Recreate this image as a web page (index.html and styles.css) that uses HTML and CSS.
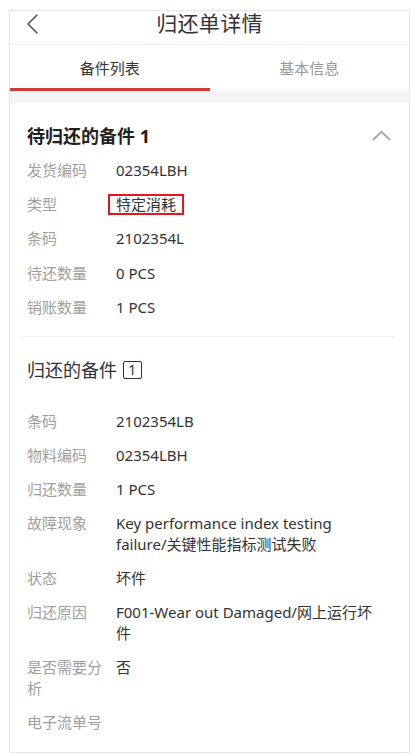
FILE: index.html
```html
<!DOCTYPE html>
<html lang="zh">
<head>
<meta charset="utf-8">
<title>归还单详情</title>
<link rel="stylesheet" href="styles.css">
</head>
<body>
<div class="frame">
  <header class="header">
    <span class="back">
      <svg width="14" height="22" viewBox="0 0 14 22"><path d="M12 2 L3 11 L12 20" fill="none" stroke="#555" stroke-width="1.6" stroke-linecap="round" stroke-linejoin="round"/></svg>
    </span>
    <h1 class="title">归还单详情</h1>
  </header>
  <nav class="tabs">
    <div class="tab active">备件列表</div>
    <div class="tab">基本信息</div>
  </nav>
  <div class="band"></div>
  <main class="card">
    <section class="sec sec1">
      <div class="sec-head">
        <h2 class="sec-title bold">待归还的备件 1</h2>
        <svg class="chev" width="19" height="11" viewBox="0 0 19 11"><path d="M1.5 9.5 L9.5 1.8 L17.5 9.5" fill="none" stroke="#aaa" stroke-width="2" stroke-linecap="round" stroke-linejoin="round"/></svg>
      </div>
      <dl class="rows">
        <dt>发货编码</dt><dd>02354LBH</dd>
        <dt>类型</dt><dd><span class="mark">特定消耗</span></dd>
        <dt>条码</dt><dd>2102354L</dd>
        <dt>待还数量</dt><dd>0 PCS</dd>
        <dt>销账数量</dt><dd>1 PCS</dd>
      </dl>
    </section>
    <div class="divider"></div>
    <section class="sec sec2">
      <h2 class="sec-title">归还的备件 <span class="count">1</span></h2>
      <dl class="rows rows2">
        <dt>条码</dt><dd>2102354LB</dd>
        <dt>物料编码</dt><dd>02354LBH</dd>
        <dt>归还数量</dt><dd>1 PCS</dd>
        <dt>故障现象</dt><dd>Key performance index testing failure/关键性能指标测试失败</dd>
        <dt>状态</dt><dd>坏件</dd>
        <dt>归还原因</dt><dd>F001-Wear out Damaged/网上运行坏件</dd>
        <dt>是否需要分析</dt><dd>否</dd>
        <dt>电子流单号</dt><dd></dd>
      </dl>
    </section>
  </main>
</div>
</body>
</html>
```
FILE: styles.css
```css
* { box-sizing: border-box; }
html, body { margin: 0; padding: 0; background: #fff; }
body {
  font-family: "Noto Sans", "Noto Sans CJK SC", sans-serif;
  color: #333;
  height: 756px;
  overflow: hidden;
}
.frame {
  margin: 10px 1px 0 9px;
  border: 1px solid #e4e7ed;
  height: 743px;
  display: flex;
  flex-direction: column;
}
.header {
  height: 34px;
  display: flex;
  align-items: flex-start;
  justify-content: center;
  position: relative;
  border-bottom: 1px solid #eceef1;
}
.back {
  position: absolute;
  left: 15px;
  top: 2px;
  display: flex;
}
.title {
  margin: 0;
  font-size: 21px;
  font-weight: 400;
  line-height: 24px;
  color: #333;
  letter-spacing: 0.3px;
}
.tabs {
  display: flex;
  height: 46px;
}
.tab {
  flex: 1;
  display: flex;
  align-items: center;
  justify-content: center;
  font-size: 15px;
  color: #999;
  padding-top: 1px;
  border-bottom: 3px solid transparent;
}
.tab.active {
  color: #333;
  border-bottom-color: #cf3a33;
}
.band {
  height: 12px;
  background: #f4f4f6;
}
.card {
  flex: 1;
  padding: 0 14px 0 17px;
}
.sec1 { padding: 21px 0 18px; }
.sec2 { padding: 21px 0 0; }
.sec-head {
  display: flex;
  align-items: center;
  justify-content: space-between;
}
.chev { margin-right: 4px; margin-top: -2px; }
.sec-title {
  margin: 0;
  font-size: 18px;
  line-height: 24px;
  font-weight: 400;
  color: #333;
}
.sec-title.bold { font-weight: 700; color: #222; }
.count {
  display: inline-block;
  border: 1.5px solid #333;
  border-radius: 2px;
  font-size: 14px;
  line-height: 16px;
  width: 19px;
  text-align: center;
  vertical-align: 2px;
  margin-left: 1px;
}
.rows {
  display: grid;
  grid-template-columns: 80px 1fr;
  column-gap: 9px;
  row-gap: 13.2px;
  margin: 12px 0 0;
  font-size: 15px;
  line-height: 21px;
}
.rows2 { margin-top: 29px; row-gap: 13.6px; line-height: 20.6px; }
.rows dt { color: #a0a0a0; }
.rows dd { margin: 0 12px 0 0; color: #333; }
.mark {
  display: inline-block;
  border: 2px solid #e8161b;
  padding: 0 6px;
  margin-left: -8px;
  line-height: 17px;
}
.divider {
  height: 1px;
  background: #f0f0f2;
  margin: 0 0 0 -4px;
}
```
